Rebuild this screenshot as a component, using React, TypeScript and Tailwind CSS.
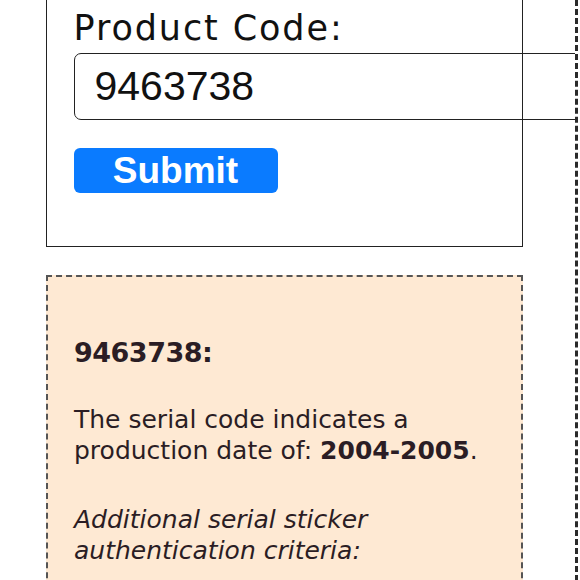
import React from "react";

export default function App() {
  return (
    <div className="w-[580px] h-[580px] overflow-hidden bg-white">
      <div className="w-[578px] min-h-[580px] border-r-[3px] border-dashed border-[#2a2a2a] overflow-hidden pl-[46px]">
        <div className="w-[477px] border-x-[1.5px] border-b-[1.5px] border-[#222] pl-[26.5px] pt-[8px] pb-[53px]">
          <div className="text-[35px] leading-[40px] tracking-[1.9px] text-[#111] font-['DejaVu_Sans',sans-serif]">
            Product Code:
          </div>
          <div className="mt-[5px] w-[540px] h-[67px] rounded-[7px] border-[1.5px] border-[#222] flex items-center pl-[20px] text-[41px] text-[#111] font-['Liberation_Sans',Arial,sans-serif]">
            9463738
          </div>
          <button className="mt-[28px] w-[204px] h-[45px] rounded-[6px] bg-[#0a7bff] text-white font-bold text-[37px] leading-[45px] flex items-center justify-center font-['Liberation_Sans',Arial,sans-serif]">
            Submit
          </button>
        </div>
        <div className="mt-[28px] w-[477px] border-2 border-dashed border-[#555] bg-[#fee9d3] pl-[26px] pt-[57.5px] pb-[40px] text-[#2b1d24] font-['DejaVu_Sans',sans-serif]">
          <div className="text-[27px] leading-[36px] font-bold tracking-[-0.5px]">9463738:</div>
          <p className="mt-[33px] text-[25px] leading-[31px]">
            The serial code indicates a production date of: <b>2004-2005</b>.
          </p>
          <p className="mt-[38px] text-[25px] leading-[31px] italic">
            Additional serial sticker authentication criteria:
          </p>
        </div>
      </div>
    </div>
  );
}
